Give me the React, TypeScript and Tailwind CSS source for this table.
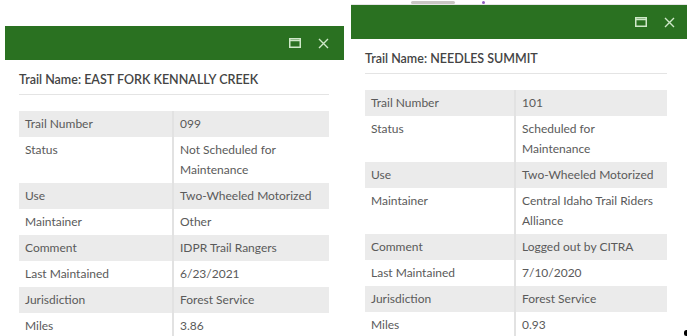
import React from 'react';

type Row = { label: string; value: string };

const EAST_FORK: Row[] = [
  { label: 'Trail Number', value: '099' },
  { label: 'Status', value: 'Not Scheduled for Maintenance' },
  { label: 'Use', value: 'Two-Wheeled Motorized' },
  { label: 'Maintainer', value: 'Other' },
  { label: 'Comment', value: 'IDPR Trail Rangers' },
  { label: 'Last Maintained', value: '6/23/2021' },
  { label: 'Jurisdiction', value: 'Forest Service' },
  { label: 'Miles', value: '3.86' },
];

const NEEDLES: Row[] = [
  { label: 'Trail Number', value: '101' },
  { label: 'Status', value: 'Scheduled for Maintenance' },
  { label: 'Use', value: 'Two-Wheeled Motorized' },
  { label: 'Maintainer', value: 'Central Idaho Trail Riders Alliance' },
  { label: 'Comment', value: 'Logged out by CITRA' },
  { label: 'Last Maintained', value: '7/10/2020' },
  { label: 'Jurisdiction', value: 'Forest Service' },
  { label: 'Miles', value: '0.93' },
];

function DockIcon() {
  return (
    <svg width="12" height="10" viewBox="0 0 12 10" fill="none">
      <rect x="0.75" y="0.75" width="10.5" height="8.5" stroke="#cfe8c9" strokeWidth="1.5" />
      <line x1="0.75" y1="2.5" x2="11.25" y2="2.5" stroke="#cfe8c9" strokeWidth="1.5" />
    </svg>
  );
}

function CloseIcon() {
  return (
    <svg width="11" height="11" viewBox="0 0 11 11" fill="none">
      <path d="M1 1 L10 10 M10 1 L1 10" stroke="#cfe8c9" strokeWidth="1.4" />
    </svg>
  );
}

function Popup({
  title,
  rows,
  width,
  tableWidth,
  headerPad,
}: {
  title: string;
  rows: Row[];
  width: string;
  tableWidth: string;
  headerPad: string;
}) {
  return (
    <div className={`${width} shrink-0 bg-white`}>
      {/* header bar */}
      <div className={`h-[34px] bg-[#2a7121] flex items-center justify-end gap-[17px] ${headerPad}`}>
        <DockIcon />
        <CloseIcon />
      </div>

      <div className="pl-[14px]">
        <div className={`${tableWidth} h-[35px] flex items-end pb-[4px] border-b border-[#e4e4e4] text-[12.5px] font-semibold text-[#444]`}>
          {title}
        </div>

        <div className={`${tableWidth} mt-[16px] text-[12px] text-[#5a5a5a] leading-[20px]`}>
          {rows.map((r, i) => (
            <div key={r.label} className={`grid grid-cols-2 ${i % 2 === 0 ? 'bg-[#ebebeb]' : 'bg-white'}`}>
              <div className="px-[6px] py-[3px] border-r-2 border-[#e2e2e2]">{r.label}</div>
              <div className="pl-[6px] pr-[8px] py-[3px]">{r.value}</div>
            </div>
          ))}
        </div>
      </div>
    </div>
  );
}

export default function App() {
  return (
    <div
      className="relative w-[687px] h-[336px] overflow-hidden bg-white flex"
      style={{ fontFamily: 'Lato, "Noto Sans", sans-serif' }}
    >
      <div className="ml-[5px] mt-[26px]">
        <Popup
          title="Trail Name: EAST FORK KENNALLY CREEK"
          rows={EAST_FORK}
          width="w-[339px]"
          tableWidth="w-[310px]"
          headerPad="pr-[15px]"
        />
      </div>
      <div className="ml-[7px] flex flex-col">
        {/* map bits peeking above the second popup */}
        <div className="h-[6px] flex items-start border-b border-[#e6e6e6]">
          <div className="ml-[60px] mt-[1px] w-[44px] h-[3px] rounded-full bg-[#c9c6c3]" />
          <div className="ml-[27px] mt-[1px] w-[3px] h-[3px] rounded-full bg-[#8e5fc0]" />
        </div>
        <Popup
          title="Trail Name: NEEDLES SUMMIT"
          rows={NEEDLES}
          width="w-[336px]"
          tableWidth="w-[302px]"
          headerPad="pr-[12px]"
        />
      </div>
      <div className="absolute right-[-2px] bottom-[0px] w-[5px] h-[6px] rounded-full bg-black" />
    </div>
  );
}
